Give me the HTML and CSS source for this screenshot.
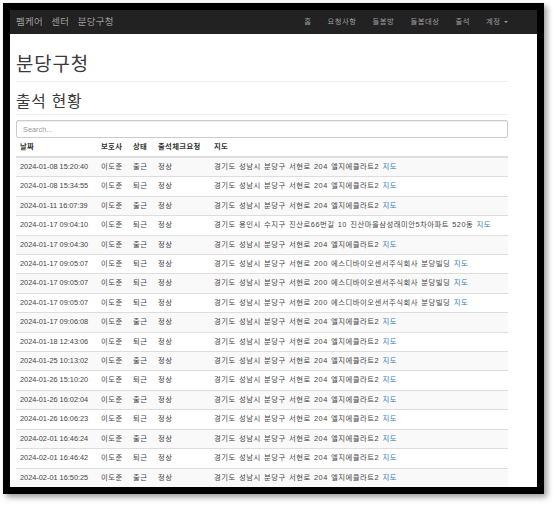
FILE: index.html
```html
<!DOCTYPE html>
<html lang="ko">
<head>
<meta charset="utf-8">
<title>분당구청 - 출석 현황</title>
<link rel="stylesheet" href="styles.css">
</head>
<body>
<div class="frame">
  <nav class="navbar">
    <div class="nav-inner">
      <a class="brand" href="#">펨케어 센터 분당구청</a>
      <ul class="nav-links">
        <li><a href="#">홈</a></li>
        <li><a href="#">요청사항</a></li>
        <li><a href="#">돌봄방</a></li>
        <li><a href="#">돌봄대상</a></li>
        <li><a href="#">출석</a></li>
        <li><a href="#">계정 <span class="caret"></span></a></li>
      </ul>
    </div>
  </nav>
  <main class="container">
    <div class="page-header"><h1>분당구청</h1></div>
    <div class="section-header"><h2>출석 현황</h2></div>
    <input class="search" type="text" placeholder="Search...">
    <table class="table">
      <colgroup>
        <col class="c-date"><col class="c-carer"><col class="c-state"><col class="c-check"><col>
      </colgroup>
      <thead>
        <tr><th>날짜</th><th>보호사</th><th>상태</th><th>출석체크요청</th><th>지도</th></tr>
      </thead>
      <tbody>
        <tr><td>2024-01-08 15:20:40</td><td>이도준</td><td>출근</td><td>정상</td><td>경기도 성남시 분당구 서현로 204 엘지에클라트2 <a href="#">지도</a></td></tr>
        <tr><td>2024-01-08 15:34:55</td><td>이도준</td><td>퇴근</td><td>정상</td><td>경기도 성남시 분당구 서현로 204 엘지에클라트2 <a href="#">지도</a></td></tr>
        <tr><td>2024-01-11 16:07:39</td><td>이도준</td><td>출근</td><td>정상</td><td>경기도 성남시 분당구 서현로 204 엘지에클라트2 <a href="#">지도</a></td></tr>
        <tr><td>2024-01-17 09:04:10</td><td>이도준</td><td>퇴근</td><td>정상</td><td>경기도 용인시 수지구 진산로66번길 10 진산마을삼성래미안5차아파트 520동 <a href="#">지도</a></td></tr>
        <tr><td>2024-01-17 09:04:30</td><td>이도준</td><td>출근</td><td>정상</td><td>경기도 성남시 분당구 서현로 204 엘지에클라트2 <a href="#">지도</a></td></tr>
        <tr><td>2024-01-17 09:05:07</td><td>이도준</td><td>퇴근</td><td>정상</td><td>경기도 성남시 분당구 서현로 200 에스디바이오센서주식회사 분당빌딩 <a href="#">지도</a></td></tr>
        <tr><td>2024-01-17 09:05:07</td><td>이도준</td><td>퇴근</td><td>정상</td><td>경기도 성남시 분당구 서현로 200 에스디바이오센서주식회사 분당빌딩 <a href="#">지도</a></td></tr>
        <tr><td>2024-01-17 09:05:07</td><td>이도준</td><td>퇴근</td><td>정상</td><td>경기도 성남시 분당구 서현로 200 에스디바이오센서주식회사 분당빌딩 <a href="#">지도</a></td></tr>
        <tr><td>2024-01-17 09:06:08</td><td>이도준</td><td>출근</td><td>정상</td><td>경기도 성남시 분당구 서현로 204 엘지에클라트2 <a href="#">지도</a></td></tr>
        <tr><td>2024-01-18 12:43:06</td><td>이도준</td><td>퇴근</td><td>정상</td><td>경기도 성남시 분당구 서현로 204 엘지에클라트2 <a href="#">지도</a></td></tr>
        <tr><td>2024-01-25 10:13:02</td><td>이도준</td><td>출근</td><td>정상</td><td>경기도 성남시 분당구 서현로 204 엘지에클라트2 <a href="#">지도</a></td></tr>
        <tr><td>2024-01-26 15:10:20</td><td>이도준</td><td>퇴근</td><td>정상</td><td>경기도 성남시 분당구 서현로 204 엘지에클라트2 <a href="#">지도</a></td></tr>
        <tr><td>2024-01-26 16:02:04</td><td>이도준</td><td>출근</td><td>정상</td><td>경기도 성남시 분당구 서현로 204 엘지에클라트2 <a href="#">지도</a></td></tr>
        <tr><td>2024-01-26 16:06:23</td><td>이도준</td><td>퇴근</td><td>정상</td><td>경기도 성남시 분당구 서현로 204 엘지에클라트2 <a href="#">지도</a></td></tr>
        <tr><td>2024-02-01 16:46:24</td><td>이도준</td><td>출근</td><td>정상</td><td>경기도 성남시 분당구 서현로 204 엘지에클라트2 <a href="#">지도</a></td></tr>
        <tr><td>2024-02-01 16:46:42</td><td>이도준</td><td>퇴근</td><td>정상</td><td>경기도 성남시 분당구 서현로 204 엘지에클라트2 <a href="#">지도</a></td></tr>
        <tr><td>2024-02-01 16:50:25</td><td>이도준</td><td>출근</td><td>정상</td><td>경기도 성남시 분당구 서현로 204 엘지에클라트2 <a href="#">지도</a></td></tr>
      </tbody>
    </table>
  </main>
</div>
</body>
</html>
```
FILE: styles.css
```css
html, body {
  margin: 0;
  height: 100%;
  overflow: hidden;
  background: #fff;
}
body {
  padding: 3px 0 0 3px;
  box-sizing: border-box;
  font-family: "Liberation Sans", "Noto Sans CJK KR", sans-serif;
  font-size: 7.35px;
  color: #444;
}
.frame {
  width: 527px;
  height: 477px;
  border: 7px solid #000;
  background: #fff;
  overflow: hidden;
  box-shadow: 3px 3px 6px rgba(0, 0, 0, 0.4);
}
a { text-decoration: none; }

.navbar {
  height: 24px;
  background: #222;
}
.nav-inner {
  width: 492px;
  height: 24px;
  margin-left: 6px;
  display: flex;
  align-items: center;
  justify-content: space-between;
}
.brand {
  font-size: 9.45px;
  letter-spacing: 0.3px;
  word-spacing: 5.5px;
  color: #9d9d9d;
  line-height: 24px;
}
.nav-links {
  list-style: none;
  margin: 0 -8px 0 0;
  padding: 0;
  display: flex;
}
.nav-links a {
  display: block;
  padding: 0 8px;
  line-height: 24px;
  letter-spacing: 0.5px;
  color: #9d9d9d;
}
.caret {
  display: inline-block;
  width: 0;
  height: 0;
  margin-left: 1px;
  vertical-align: middle;
  border-top: 2px solid #9d9d9d;
  border-left: 2px solid transparent;
  border-right: 2px solid transparent;
}

.container {
  width: 492px;
  margin-left: 6px;
}
.page-header {
  margin-top: 20px;
  padding-bottom: 6px;
  border-bottom: 1px solid #eee;
}
h1 {
  margin: 0;
  font-size: 18.9px;
  line-height: 21px;
  font-weight: 400;
  letter-spacing: 0.9px;
  color: #3a3a3a;
}
.section-header {
  margin-top: 11px;
  padding-bottom: 3px;
  border-bottom: 1px solid #eee;
}
h2 {
  margin: 0;
  font-size: 15.75px;
  line-height: 18px;
  font-weight: 400;
  letter-spacing: 0.8px;
  color: #3a3a3a;
}
.search {
  display: block;
  box-sizing: border-box;
  width: 492px;
  height: 18px;
  margin: 5px 0 0;
  padding: 0 6px;
  border: 1px solid #ccc;
  border-radius: 2px;
  box-shadow: inset 0 1px 1px rgba(0, 0, 0, 0.075);
  font-family: inherit;
  font-size: 7.35px;
  color: #555;
  background: #fff;
}
.search::placeholder { color: #999; }

.table {
  width: 492px;
  border-collapse: collapse;
  table-layout: fixed;
}
.c-date { width: 81px; }
.c-carer { width: 32px; }
.c-state { width: 25px; }
.c-check { width: 56px; }
.table th {
  text-align: left;
  font-weight: 700;
  color: #333;
  padding: 4px 4px;
  line-height: 10px;
  letter-spacing: 0.35px;
  border-bottom: 2px solid #ddd;
  white-space: nowrap;
}
.table td {
  padding: 4px 4px;
  line-height: 10.4px;
  letter-spacing: 0.5px;
  word-spacing: 0.7px;
  border-top: 1px solid #ddd;
  white-space: nowrap;
}
.table td:first-child {
  letter-spacing: 0;
  word-spacing: 0;
}
.table tbody tr:nth-child(odd) { background: #f9f9f9; }
.table td a { color: #337ab7; }
```
